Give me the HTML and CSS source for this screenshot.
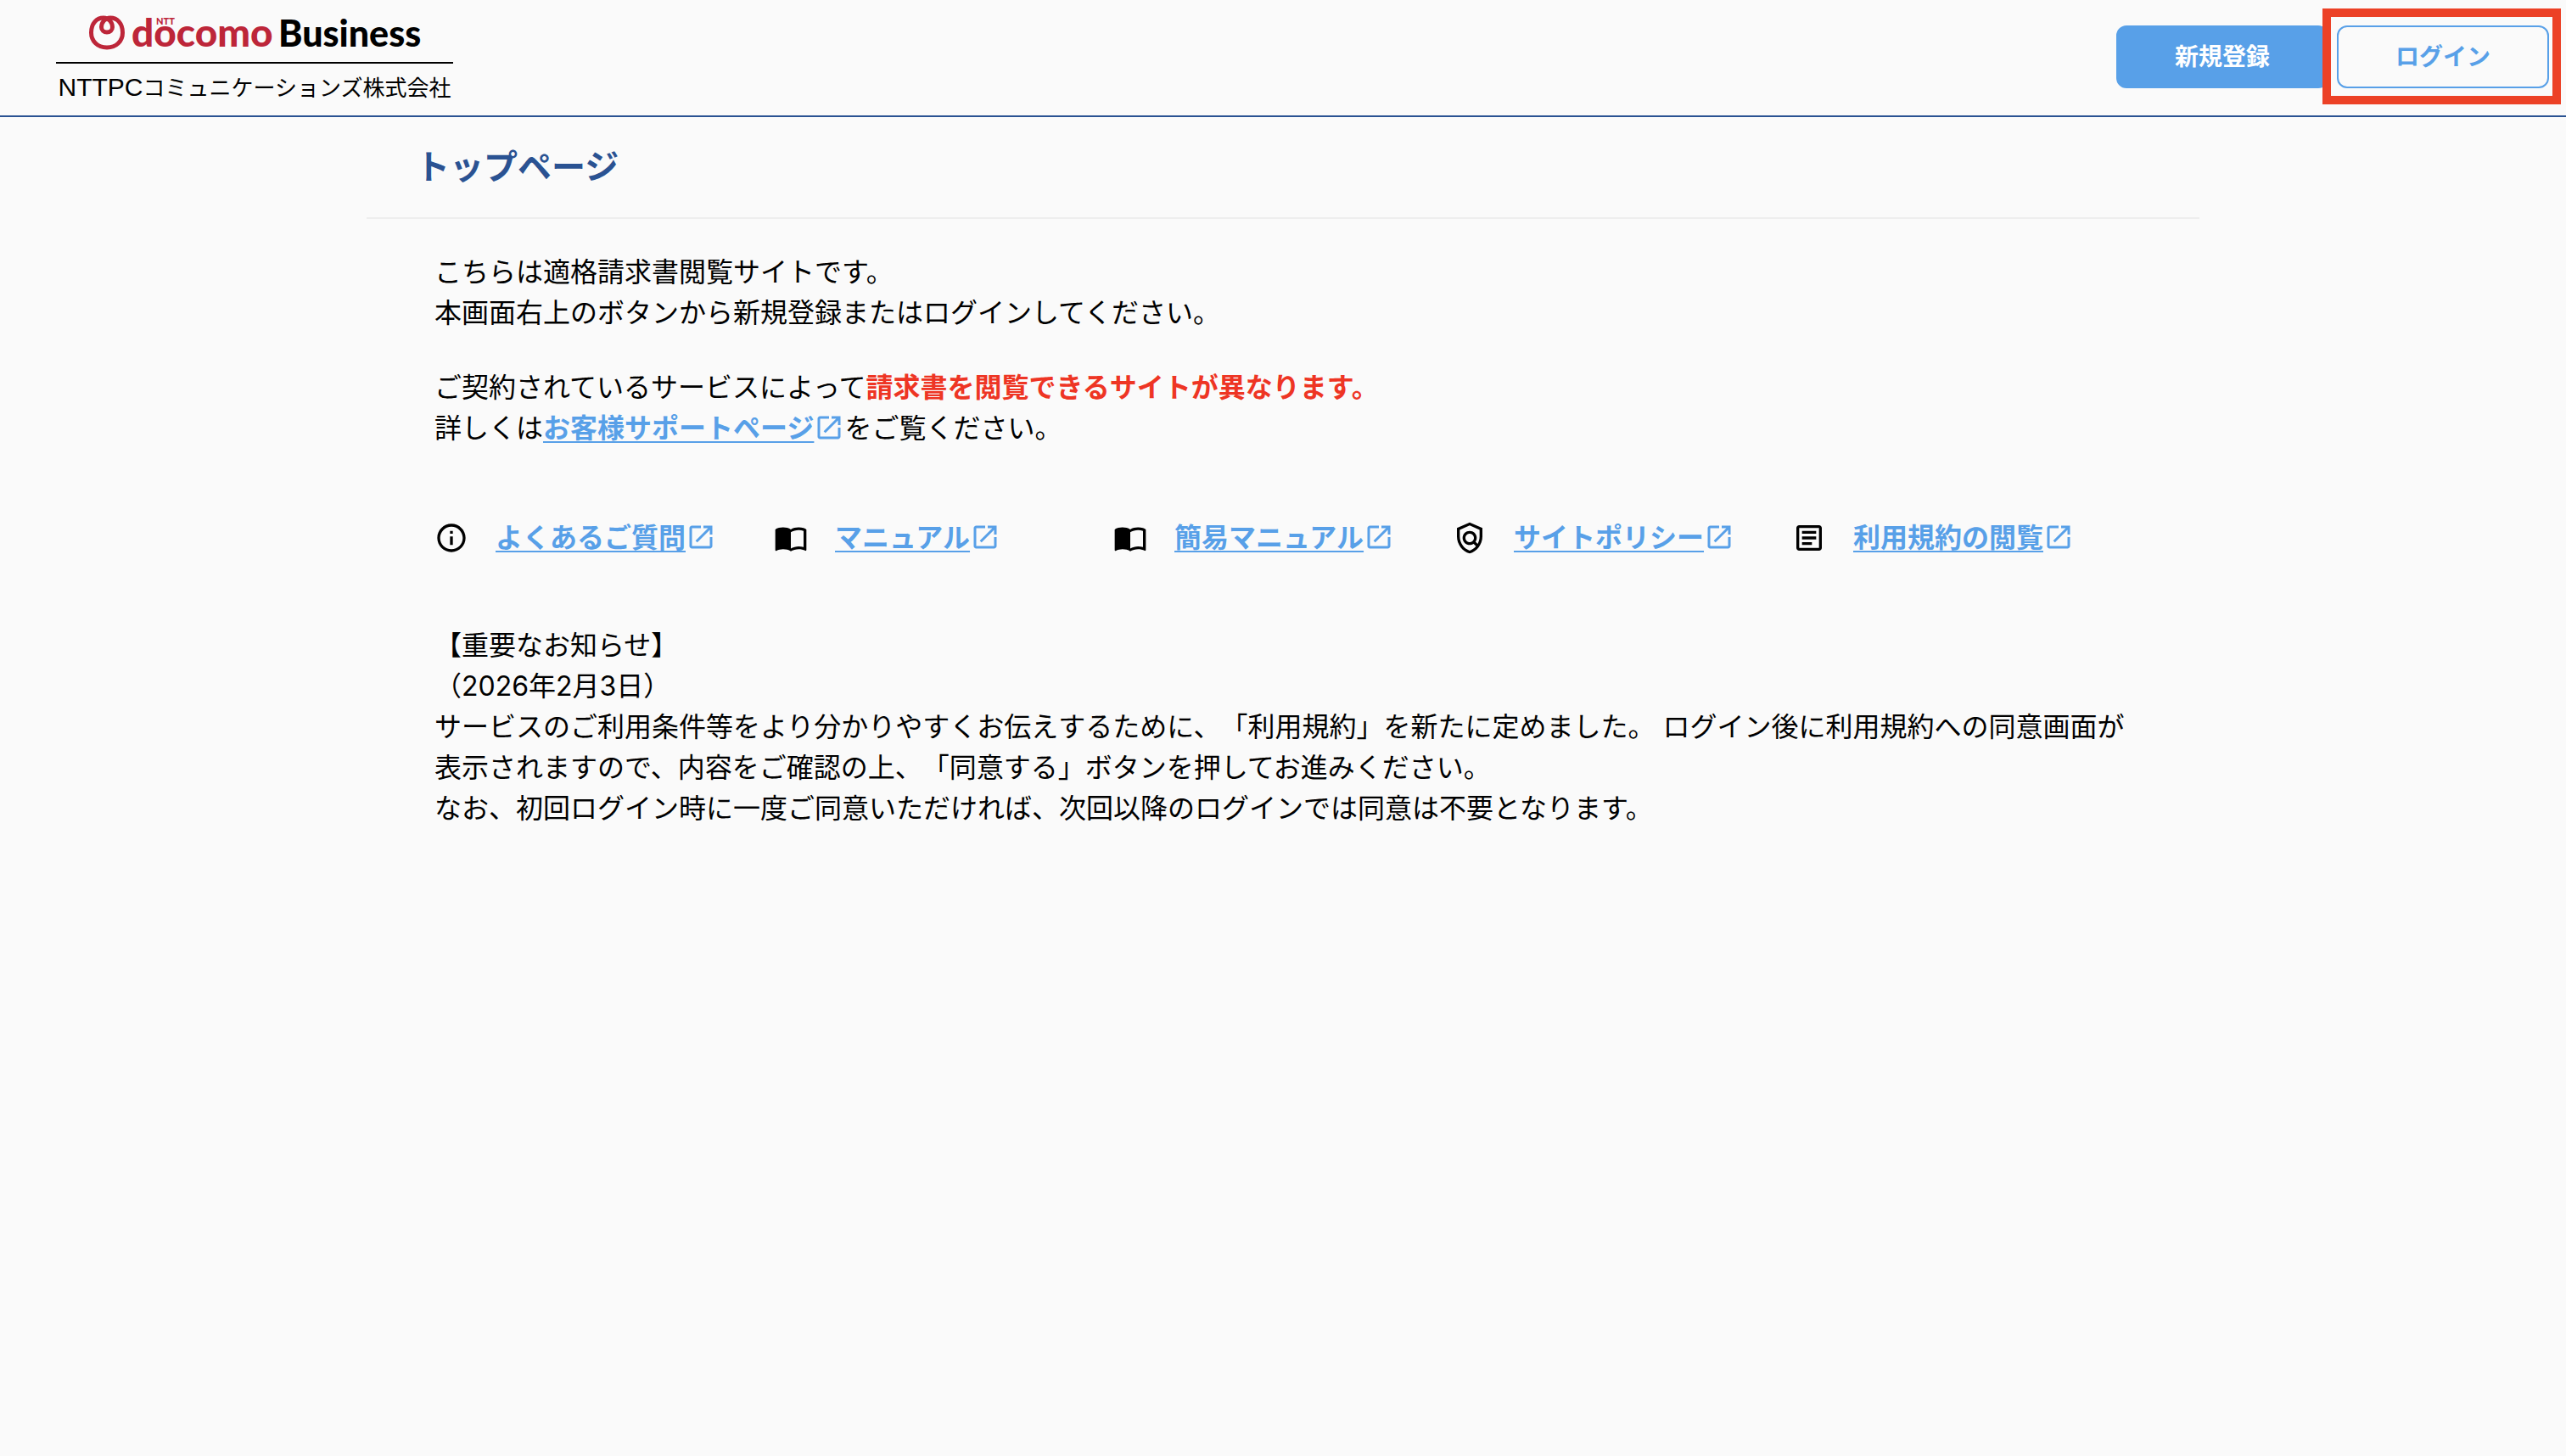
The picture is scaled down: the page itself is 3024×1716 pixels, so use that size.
FILE: index.html
```html
<!DOCTYPE html>
<html lang="ja">
<head>
    <meta charset="UTF-8">
    <meta name="viewport" content="width=device-width, initial-scale=1.0">
    <title>トップページ</title>
    <link rel="stylesheet" href="styles.css">
</head>
<body>
    <!-- Shared icons -->
    <svg class="sprite" aria-hidden="true">
        <symbol id="open" viewBox="0 0 24 24">
            <path d="M19 19H5V5h7V3H5c-1.11 0-2 .9-2 2v14c0 1.1.89 2 2 2h14c1.1 0 2-.9 2-2v-7h-2v7zM14 3v2h3.59l-9.83 9.83 1.41 1.41L19 6.41V10h2V3h-7z"/>
        </symbol>
        <symbol id="book" viewBox="0 0 24 24">
            <path d="M21 5c-1.11-.35-2.33-.5-3.5-.5-1.95 0-4.05.4-5.5 1.5-1.45-1.1-3.55-1.5-5.5-1.5S2.45 4.9 1 6v14.65c0 .25.25.5.5.5.1 0 .15-.05.25-.05C3.1 20.45 5.05 20 6.5 20c1.95 0 4.05.4 5.5 1.5 1.35-.85 3.8-1.5 5.5-1.5 1.65 0 3.35.3 4.75 1.05.1.05.15.05.25.05.25 0 .5-.25.5-.5V6c-.6-.45-1.25-.75-2-1zm0 13.5c-1.1-.35-2.3-.5-3.5-.5-1.7 0-4.15.65-5.5 1.5V8c1.35-.85 3.8-1.5 5.5-1.5 1.2 0 2.4.15 3.5.5v11.5z"/>
        </symbol>
    </svg>

    <header class="header">
        <a class="brand" href="#">
            <svg class="brand-logo" viewBox="0 0 468 72" role="img" aria-label="NTT docomo Business">
                <path class="ring" d="M60 55.500C49 55.500 41.500 48 41.500 38C41.500 27 48 20.500 56 20.500C62 20.500 66.500 26 66.500 31.500C66.500 35 63.500 37.500 60 37.500C56.500 37.500 53.500 35 53.500 31.500C53.500 26 58 20.500 64 20.500C72 20.500 78.500 27 78.500 38C78.500 48 71 55.500 60 55.500Z"/>
                <text class="docomo" x="89" y="54">docomo</text>
                <text class="ntt" x="118" y="28">NTT</text>
                <text class="business" x="262" y="54">Business</text>
            </svg>
            <span class="company"><span class="company-en">NTTPC</span>コミュニケーションズ株式会社</span>
        </a>
        <div class="header-buttons">
            <button type="button" class="btn btn-register">新規登録</button>
            <button type="button" class="btn btn-login">ログイン</button>
        </div>
    </header>

    <main class="container">
        <h1>トップページ</h1>
        <div class="content">
            <p>こちらは適格請求書閲覧サイトです。<br>本画面右上のボタンから新規登録またはログインしてください。</p>
            <p>ご契約されているサービスによって<strong class="warning">請求書を閲覧できるサイトが異なります。</strong><br>詳しくは<a class="link" href="#">お客様サポートページ</a><svg class="open-icon"><use href="#open"/></svg>をご覧ください。</p>

            <ul class="links">
                <li>
                    <svg class="icon" viewBox="0 0 24 24"><path d="M11 7h2v2h-2zm0 4h2v6h-2zm1-9C6.48 2 2 6.48 2 12s4.48 10 10 10 10-4.48 10-10S17.52 2 12 2zm0 18c-4.41 0-8-3.59-8-8s3.59-8 8-8 8 3.59 8 8-3.59 8-8 8z"/></svg>
                    <span><a class="link" href="#">よくあるご質問</a><svg class="open-icon"><use href="#open"/></svg></span>
                </li>
                <li>
                    <svg class="icon"><use href="#book"/></svg>
                    <span><a class="link" href="#">マニュアル</a><svg class="open-icon"><use href="#open"/></svg></span>
                </li>
                <li>
                    <svg class="icon"><use href="#book"/></svg>
                    <span><a class="link" href="#">簡易マニュアル</a><svg class="open-icon"><use href="#open"/></svg></span>
                </li>
                <li>
                    <svg class="icon" viewBox="0 0 24 24"><path d="M12 1 3 5v6c0 5.55 3.84 10.74 9 12 5.16-1.26 9-6.45 9-12V5l-9-4zm7 10c0 1.85-.51 3.65-1.38 5.21l-1.45-1.45c1.29-1.94 1.07-4.58-.64-6.29-1.95-1.95-5.12-1.95-7.07 0-1.95 1.95-1.95 5.12 0 7.07 1.71 1.71 4.35 1.92 6.29.64l1.72 1.72c-1.19 1.42-2.73 2.51-4.47 3.04-4.02-1.25-7-5.42-7-9.93V6.3l7-3.11 7 3.11V11zm-7 4c-1.66 0-3-1.34-3-3s1.34-3 3-3 3 1.34 3 3-1.34 3-3 3z"/></svg>
                    <span><a class="link" href="#">サイトポリシー</a><svg class="open-icon"><use href="#open"/></svg></span>
                </li>
                <li>
                    <svg class="icon" viewBox="0 0 24 24"><path d="M19 5v14H5V5h14m0-2H5c-1.1 0-2 .9-2 2v14c0 1.1.9 2 2 2h14c1.1 0 2-.9 2-2V5c0-1.1-.9-2-2-2zM14 17H7v-2h7v2zm3-4H7v-2h10v2zm0-4H7V7h10v2z"/></svg>
                    <span><a class="link" href="#">利用規約の閲覧</a><svg class="open-icon"><use href="#open"/></svg></span>
                </li>
            </ul>

            <p>【重要なお知らせ】<br>（2026年2月3日）<br>サービスのご利用条件等をより分かりやすくお伝えするために、「利用規約」を新たに定めました。 ログイン後に利用規約への同意画面が表示されますので、内容をご確認の上、「同意する」ボタンを押してお進みください。<br>なお、初回ログイン時に一度ご同意いただければ、次回以降のログインでは同意は不要となります。</p>
        </div>
    </main>
</body>
</html>
```

FILE: styles.css
```css
* {
    box-sizing: border-box;
}
body {
    margin: 0;
    font-family: 'Inter', 'Noto Sans CJK JP', sans-serif;
    font-size: 32px;
    line-height: 48px;
    color: #000;
    background-color: #fafafa;
    text-spacing-trim: space-all;
}
.sprite {
    display: none;
}
.header {
    display: flex;
    justify-content: space-between;
    align-items: flex-start;
    height: 138px;
    padding: 0 20px 0 66px;
    border-bottom: 2px solid #2a5292;
}
.brand {
    display: block;
    width: 468px;
    color: #000;
    text-decoration: none;
}
.brand-logo {
    display: block;
    width: 100%;
    height: 73px;
}
.ring {
    fill: none;
    stroke: #bd2639;
    stroke-width: 5;
}
.docomo, .ntt, .business {
    font-family: 'Lato', sans-serif;
    font-weight: 900;
    font-size: 46px;
    fill: #bd2639;
}
.ntt {
    font-size: 11px;
}
.business {
    font-size: 43px;
    fill: #000;
}
.company {
    display: block;
    border-top: 2px solid #000;
    padding-top: 6px;
    font-size: 26px;
    line-height: 44px;
    text-align: center;
    white-space: nowrap;
}
.company-en {
    font-family: 'Liberation Sans', sans-serif;
    font-size: 30px;
}
.header-buttons {
    display: flex;
    gap: 10px;
    padding-top: 30px;
}
.btn {
    width: 250px;
    height: 74px;
    padding: 0 0 5px;
    border: 2px solid #58a0e8;
    border-radius: 12px;
    font-family: inherit;
    font-size: 28px;
    font-weight: 700;
}
.btn-register {
    background-color: #58a0e8;
    color: #fff;
}
.btn-login {
    position: relative;
    background-color: transparent;
    color: #58a0e8;
}
/* red frame that points out the login button */
.btn-login::after {
    content: '';
    position: absolute;
    inset: -22px -16px -21px -19px;
    border: 10px solid #ec4126;
}
.container {
    max-width: 2160px;
    margin: 0 auto;
}
h1 {
    margin: 0;
    padding: 29px 58px;
    border-bottom: 2px solid #eee;
    font-size: 40px;
    line-height: 60px;
    color: #2a5292;
}
.content {
    padding: 39px 80px;
}
p {
    margin: 0 0 40px;
}
.warning {
    color: #ee3524;
}
.link {
    color: #58a0e8;
    font-weight: 700;
    text-decoration: underline;
    text-decoration-thickness: 2px;
    text-underline-offset: 4px;
}
.open-icon {
    width: 36px;
    height: 36px;
    fill: #58a0e8;
    vertical-align: -6px;
}
.links {
    display: grid;
    grid-template-columns: repeat(5, 1fr);
    margin: 0;
    padding: 41px 0 79px;
    list-style: none;
}
.links li {
    display: flex;
    align-items: center;
    gap: 32px;
    white-space: nowrap;
}
.icon {
    width: 40px;
    height: 40px;
}
```
